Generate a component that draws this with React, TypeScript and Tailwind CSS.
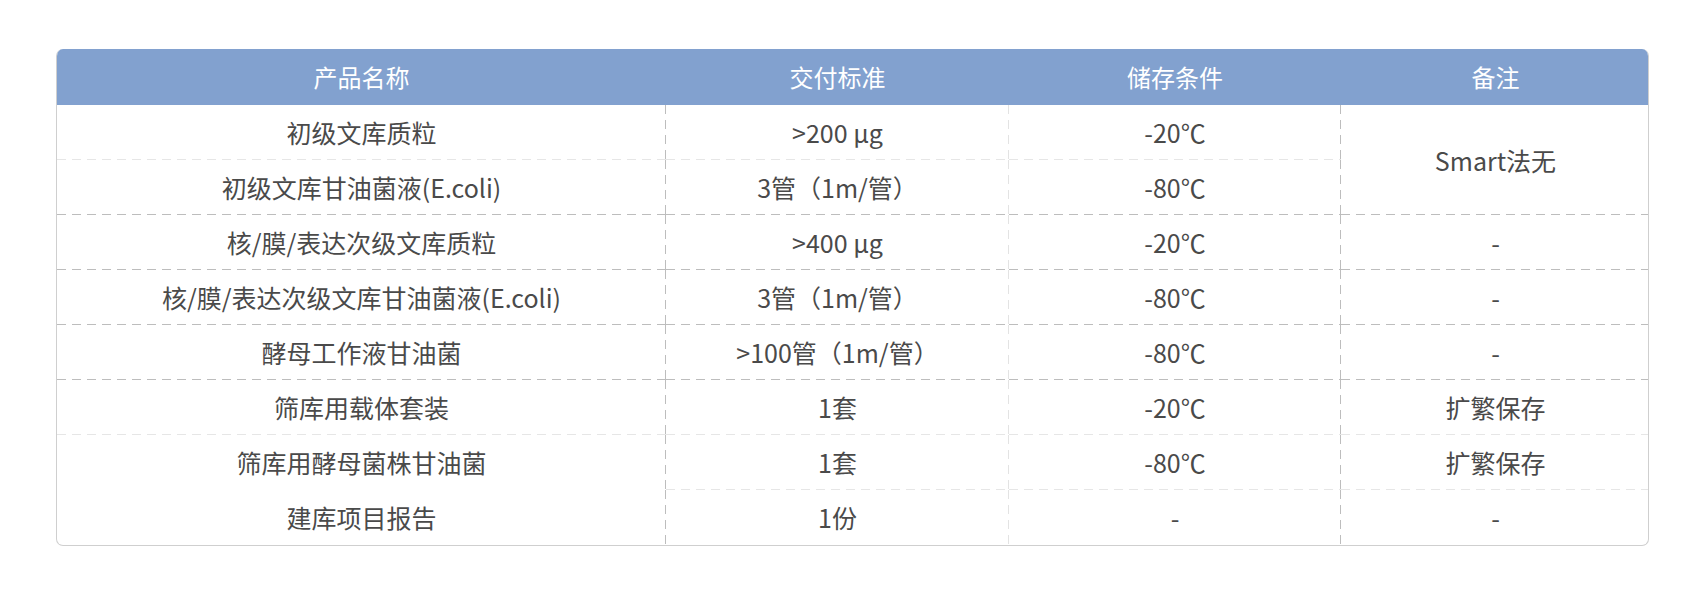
import type { ReactNode } from 'react'

type Line = 'dark' | 'light' | 'none'

// background-image per (right line, bottom line); size/position/repeat are shared
const LINES: Record<string, string> = {
  'dark-dark': '[background-image:linear-gradient(to_bottom,#bdbdbd_9px,transparent_9px),linear-gradient(to_right,#bdbdbd_9px,transparent_9px)]',
  'dark-light': '[background-image:linear-gradient(to_bottom,#bdbdbd_9px,transparent_9px),linear-gradient(to_right,#e6e6e6_9px,transparent_9px)]',
  'dark-none': '[background-image:linear-gradient(to_bottom,#bdbdbd_9px,transparent_9px),none]',
  'light-dark': '[background-image:linear-gradient(to_bottom,#e3e3e3_9px,transparent_9px),linear-gradient(to_right,#bdbdbd_9px,transparent_9px)]',
  'light-light': '[background-image:linear-gradient(to_bottom,#e3e3e3_9px,transparent_9px),linear-gradient(to_right,#e6e6e6_9px,transparent_9px)]',
  'light-none': '[background-image:linear-gradient(to_bottom,#e3e3e3_9px,transparent_9px),none]',
  'none-dark': '[background-image:none,linear-gradient(to_right,#bdbdbd_9px,transparent_9px)]',
  'none-light': '[background-image:none,linear-gradient(to_right,#e6e6e6_9px,transparent_9px)]',
  'none-none': '',
}

type Row = {
  name: string
  spec: string
  temp: string
  note?: string
  noteSpan?: number
  bottom: Line
  nameBottom?: Line
}

const rows: Row[] = [
  { name: '初级文库质粒', spec: '>200 μg', temp: '-20℃', note: 'Smart法无', noteSpan: 2, bottom: 'light' },
  { name: '初级文库甘油菌液(E.coli)', spec: '3管（1m/管）', temp: '-80℃', bottom: 'dark' },
  { name: '核/膜/表达次级文库质粒', spec: '>400 μg', temp: '-20℃', note: '-', bottom: 'dark' },
  { name: '核/膜/表达次级文库甘油菌液(E.coli)', spec: '3管（1m/管）', temp: '-80℃', note: '-', bottom: 'dark' },
  { name: '酵母工作液甘油菌', spec: '>100管（1m/管）', temp: '-80℃', note: '-', bottom: 'dark' },
  { name: '筛库用载体套装', spec: '1套', temp: '-20℃', note: '扩繁保存', bottom: 'light' },
  { name: '筛库用酵母菌株甘油菌', spec: '1套', temp: '-80℃', note: '扩繁保存', bottom: 'light', nameBottom: 'none' },
  { name: '建库项目报告', spec: '1份', temp: '-', note: '-', bottom: 'none' },
]

function Cell({ children, right, bottom, rowSpan }: { children: ReactNode; right: Line; bottom: Line; rowSpan?: number }) {
  return (
    <td
      rowSpan={rowSpan}
      className={`h-[55px] p-0 text-center align-middle text-[25px] leading-none text-[#4a4a4a] [background-size:1px_15px,15px_1px] [background-position:right_top,left_bottom] [background-repeat:repeat-y,repeat-x] ${LINES[`${right}-${bottom}`]}`}
    >
      {children}
    </td>
  )
}

export default function App() {
  return (
    <div className="min-h-[597px] w-[1700px] bg-white pt-[49px] pl-[56px]">
      <div
        className="w-[1593px] overflow-hidden rounded-[7px] border border-t-0 border-[#cfcfcf]"
        style={{ fontFamily: '"Noto Sans CJK SC", "Noto Sans", sans-serif' }}
      >
        <table className="w-full table-fixed border-collapse">
          <colgroup>
            <col className="w-[609px]" />
            <col className="w-[343px]" />
            <col className="w-[332px]" />
            <col className="w-[309px]" />
          </colgroup>
          <thead>
            <tr className="h-[56px] bg-[#82a1cf] text-white">
              <th className="text-[24px] font-normal leading-none">产品名称</th>
              <th className="text-[24px] font-normal leading-none">交付标准</th>
              <th className="text-[24px] font-normal leading-none">储存条件</th>
              <th className="text-[24px] font-normal leading-none">备注</th>
            </tr>
          </thead>
          <tbody>
            {rows.map((r, i) => (
              <tr key={i}>
                <Cell right="dark" bottom={r.nameBottom ?? r.bottom}>{r.name}</Cell>
                <Cell right="light" bottom={r.bottom}>{r.spec}</Cell>
                <Cell right="dark" bottom={r.bottom}>{r.temp}</Cell>
                {r.note !== undefined && (
                  <Cell right="none" rowSpan={r.noteSpan} bottom={r.noteSpan ? rows[i + r.noteSpan - 1].bottom : r.bottom}>
                    {r.note}
                  </Cell>
                )}
              </tr>
            ))}
          </tbody>
        </table>
      </div>
    </div>
  )
}
